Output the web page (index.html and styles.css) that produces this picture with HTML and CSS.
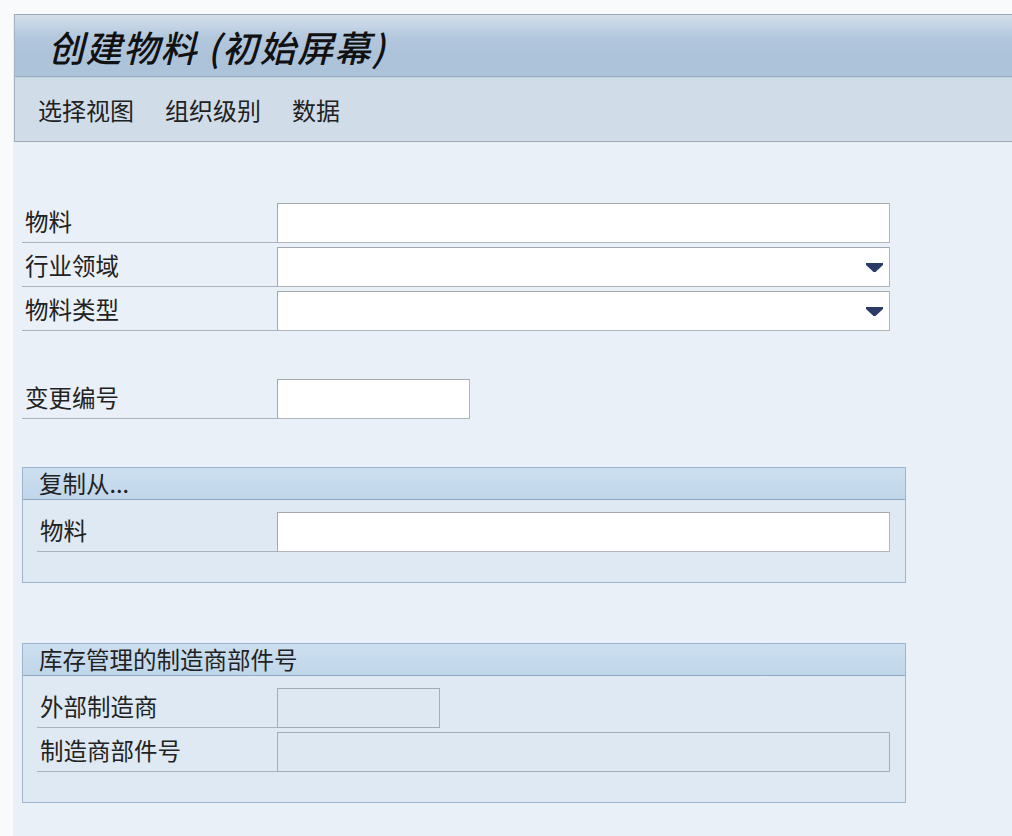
FILE: index.html
```html
<!DOCTYPE html>
<html lang="zh-CN">
<head>
<meta charset="utf-8">
<title>创建物料 (初始屏幕)</title>
<link rel="stylesheet" href="styles.css">
</head>
<body>
<div class="app">
  <header class="titlebar">
    <h1 class="title">创建物料 (初始屏幕)</h1>
  </header>
  <nav class="toolbar">
    <span class="tool">选择视图</span>
    <span class="tool">组织级别</span>
    <span class="tool">数据</span>
  </nav>
  <main class="content">
    <div class="rows">
      <div class="row">
        <div class="label">物料</div>
        <div class="field wide"></div>
      </div>
      <div class="row">
        <div class="label">行业领域</div>
        <div class="field wide select">
          <svg class="arrow" width="17" height="9" viewBox="0 0 17 9"><polygon points="0,0 17,0 17,2 9.5,9 7.5,9 0,2" fill="#2a3c66"/></svg>
        </div>
      </div>
      <div class="row">
        <div class="label">物料类型</div>
        <div class="field wide select">
          <svg class="arrow" width="17" height="9" viewBox="0 0 17 9"><polygon points="0,0 17,0 17,2 9.5,9 7.5,9 0,2" fill="#2a3c66"/></svg>
        </div>
      </div>
    </div>

    <div class="rows spaced">
      <div class="row">
        <div class="label">变更编号</div>
        <div class="field short"></div>
      </div>
    </div>

    <section class="group first">
      <div class="group-head">复制从...</div>
      <div class="group-body">
        <div class="row">
          <div class="label inner">物料</div>
          <div class="field wide"></div>
        </div>
      </div>
    </section>

    <section class="group second">
      <div class="group-head">库存管理的制造商部件号</div>
      <div class="group-body">
        <div class="row">
          <div class="label inner">外部制造商</div>
          <div class="field mid disabled"></div>
        </div>
        <div class="row">
          <div class="label inner">制造商部件号</div>
          <div class="field wide disabled"></div>
        </div>
      </div>
    </section>
  </main>
</div>
</body>
</html>
```

FILE: styles.css
```css
* { box-sizing: border-box; }

html, body {
  margin: 0;
  padding: 0;
}

body {
  background: #f9fafc;
  font-family: "Noto Sans CJK SC", "Noto Sans", sans-serif;
  color: #1e1e1e;
  height: 836px;
  overflow: hidden;
}

.app {
  margin: 14px 0 0 13px;
  background: #eaf0f7;
  min-height: 822px;
}

.titlebar {
  margin-left: 1px;
  height: 63px;
  border-top: 1px solid #9aabbf;
  border-left: 1px solid #a4b2c3;
  border-bottom: 1px solid #9aabbf;
  background: linear-gradient(to bottom, #d3dfea 0px, #c5d5e5 10px, #b3c8dd 22px, #adc3da 40px, #adc3da 100%);
  display: flex;
  align-items: center;
  padding-left: 33px;
}

.title {
  margin: 0;
  font-size: 36px;
  font-style: italic;
  font-weight: 500;
  line-height: 44px;
  color: #111;
  letter-spacing: 1.5px;
}

.toolbar {
  margin-left: 1px;
  height: 65px;
  border-left: 1px solid #a4b2c3;
  border-top: 1px solid #c2cfdc;
  border-bottom: 1px solid #9eaab8;
  background: #d0dde8;
  display: flex;
  align-items: center;
  gap: 31px;
  padding-left: 23px;
  padding-top: 1px;
}

.tool {
  font-size: 24px;
  line-height: 30px;
  color: #222;
}

.content {
  padding: 61px 0 0 9px;
}

.rows {
  display: flex;
  flex-direction: column;
  gap: 4px;
  width: 868px;
}

.rows.spaced {
  margin-top: 48px;
}

.row {
  display: flex;
  align-items: stretch;
  height: 40px;
}

.label {
  width: 255px;
  border-bottom: 1px solid #a9b3c0;
  font-size: 23.5px;
  line-height: 30px;
  padding: 3px 0 0 3px;
  color: #222;
  white-space: nowrap;
}

.label.inner {
  width: 240px;
}

.field {
  height: 40px;
  background: #fff;
  border: 1px solid #b1b6bc;
  border-top-color: #a3a8ae;
  border-left-color: #a3a8ae;
  position: relative;
}

.field.wide { width: 613px; }
.field.short { width: 193px; }
.field.mid { width: 163px; }

.field.disabled {
  background: #dde8f2;
  border-color: #a4adb6;
}

.arrow {
  position: absolute;
  right: 6px;
  top: 15px;
}

.group {
  width: 884px;
  border: 1px solid #9db4cd;
  background: #dee9f3;
}

.group.first {
  margin-top: 48px;
}

.group.second {
  margin-top: 60px;
}

.group-head {
  height: 32px;
  border-bottom: 1px solid #8fa9c6;
  background: linear-gradient(to bottom, #ccdff0 0%, #c0d6ea 100%);
  font-size: 23.5px;
  line-height: 30px;
  padding-left: 16px;
  color: #222;
}

.group-body {
  display: flex;
  flex-direction: column;
  gap: 4px;
  padding: 12px 0 30px 14px;
}
```
